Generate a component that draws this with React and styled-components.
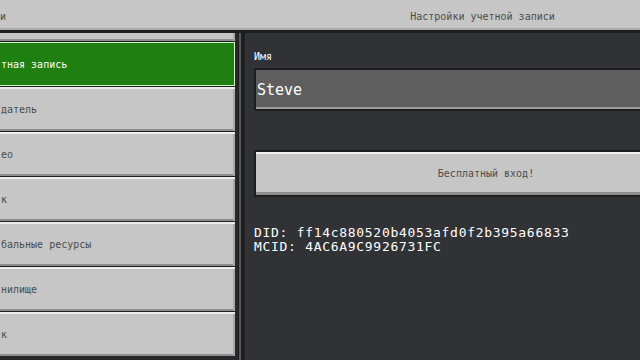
import React from "react";
import styled, { createGlobalStyle } from "styled-components";

const menuItems = [
  { label: "", selected: false },
  { label: "тная запись", selected: true },
  { label: "датель", selected: false },
  { label: "ео", selected: false },
  { label: "к", selected: false },
  { label: "бальные ресурсы", selected: false },
  { label: "нилище", selected: false },
  { label: "к", selected: false },
];

const App = () => {
  return (
    <Root>
      <GlobalStyle />
      <Header>
        <HeaderLeft>и</HeaderLeft>
        <Title>Настройки учетной записи</Title>
      </Header>
      <Body>
        <Sidebar>
          <MenuList>
            {menuItems.map((item, i) => (
              <MenuButton key={i} $selected={item.selected}>
                {item.label}
              </MenuButton>
            ))}
          </MenuList>
        </Sidebar>
        <Divider />
        <Main>
          <Label>Имя</Label>
          <NameInput>Steve</NameInput>
          <WideButton>Бесплатный вход!</WideButton>
          <Ids>
            <IdLine>DID: ff14c880520b4053afd0f2b395a66833</IdLine>
            <IdLine>MCID: 4AC6A9C9926731FC</IdLine>
          </Ids>
        </Main>
      </Body>
    </Root>
  );
};

export default App;

const GlobalStyle = createGlobalStyle`
  html, body {
    margin: 0;
    padding: 0;
    overflow: hidden;
    background: #313236;
  }
`;

const Root = styled.div`
  width: 640px;
  height: 360px;
  display: flex;
  flex-direction: column;
  overflow: hidden;
  font-family: "DejaVu Sans Mono", monospace;
`;

const Header = styled.div`
  height: 30px;
  display: grid;
  grid-template-columns: 245px 1fr;
  align-items: center;
  background: #c6c6c6;
  box-shadow: inset 0 -2px 0 #a9a9a9;
  border-bottom: 3px solid #1e1e1f;
  font-size: 10px;
  color: #4c4c4c;
`;

const HeaderLeft = styled.div`
  padding-top: 2px;
`;

const Title = styled.div`
  text-align: center;
  padding: 2px 0 0 80px;
`;

const Body = styled.div`
  flex: 1;
  display: flex;
  min-height: 0;
`;

const Sidebar = styled.div`
  width: 235px;
  padding-right: 3px;
  background: #28282a;
  overflow: hidden;
`;

const MenuList = styled.div`
  display: flex;
  flex-direction: column;
  gap: 1px;
  margin-top: -36px;
  background: #1e1e1f;
`;

const MenuButton = styled.div`
  height: 44px;
  display: flex;
  align-items: center;
  padding-left: 1px;
  font-size: 10px;
  white-space: nowrap;
  color: ${({ $selected }) => ($selected ? "#ffffff" : "#4c4c4c")};
  background: ${({ $selected }) => ($selected ? "#1f7f10" : "#c6c6c6")};
  box-shadow: ${({ $selected }) =>
    $selected
      ? "inset 0 1px 0 #d6f5c8, inset -1px 0 0 #d6f5c8, inset 0 -1px 0 #d6f5c8"
      : "inset 0 2px 0 #ececec, inset -2px 0 0 #a8a8a8, inset 0 -2px 0 #8e8e8e"};
`;

const Divider = styled.div`
  width: 2px;
  background: #58585b;
  border-left: 1px solid #1e1e1f;
  border-right: 4px solid #1e1e1f;
`;

const Main = styled.div`
  flex: 1;
  display: flex;
  flex-direction: column;
  padding: 18px 0 0 9px;
  background: #313236;
`;

const Label = styled.div`
  font-size: 10px;
  line-height: 12px;
  color: #ffffff;
  margin-bottom: 5px;
`;

const NameInput = styled.div`
  height: 39px;
  display: flex;
  align-items: center;
  padding-left: 1px;
  border: 2px solid #1e1e1f;
  border-right: none;
  background: #5e5e5e;
  box-shadow: inset 0 -2px 0 #9a9a9a;
  font-size: 15px;
  color: #ffffff;
`;

const WideButton = styled.div`
  margin-top: 39px;
  height: 43px;
  display: flex;
  align-items: center;
  justify-content: center;
  padding-left: 76px;
  border: 2px solid #1e1e1f;
  border-right: none;
  background: #c6c6c6;
  box-shadow: inset 0 2px 0 #f0f0f0, inset 0 -3px 0 #8e8e8e;
  font-size: 10px;
  color: #4c4c4c;
`;

const Ids = styled.div`
  margin-top: 29px;
  display: flex;
  flex-direction: column;
  color: #ffffff;
`;

const IdLine = styled.div`
  font-size: 13px;
  line-height: 14px;
  height: 14px;
  letter-spacing: 0.7px;
  white-space: nowrap;
`;
